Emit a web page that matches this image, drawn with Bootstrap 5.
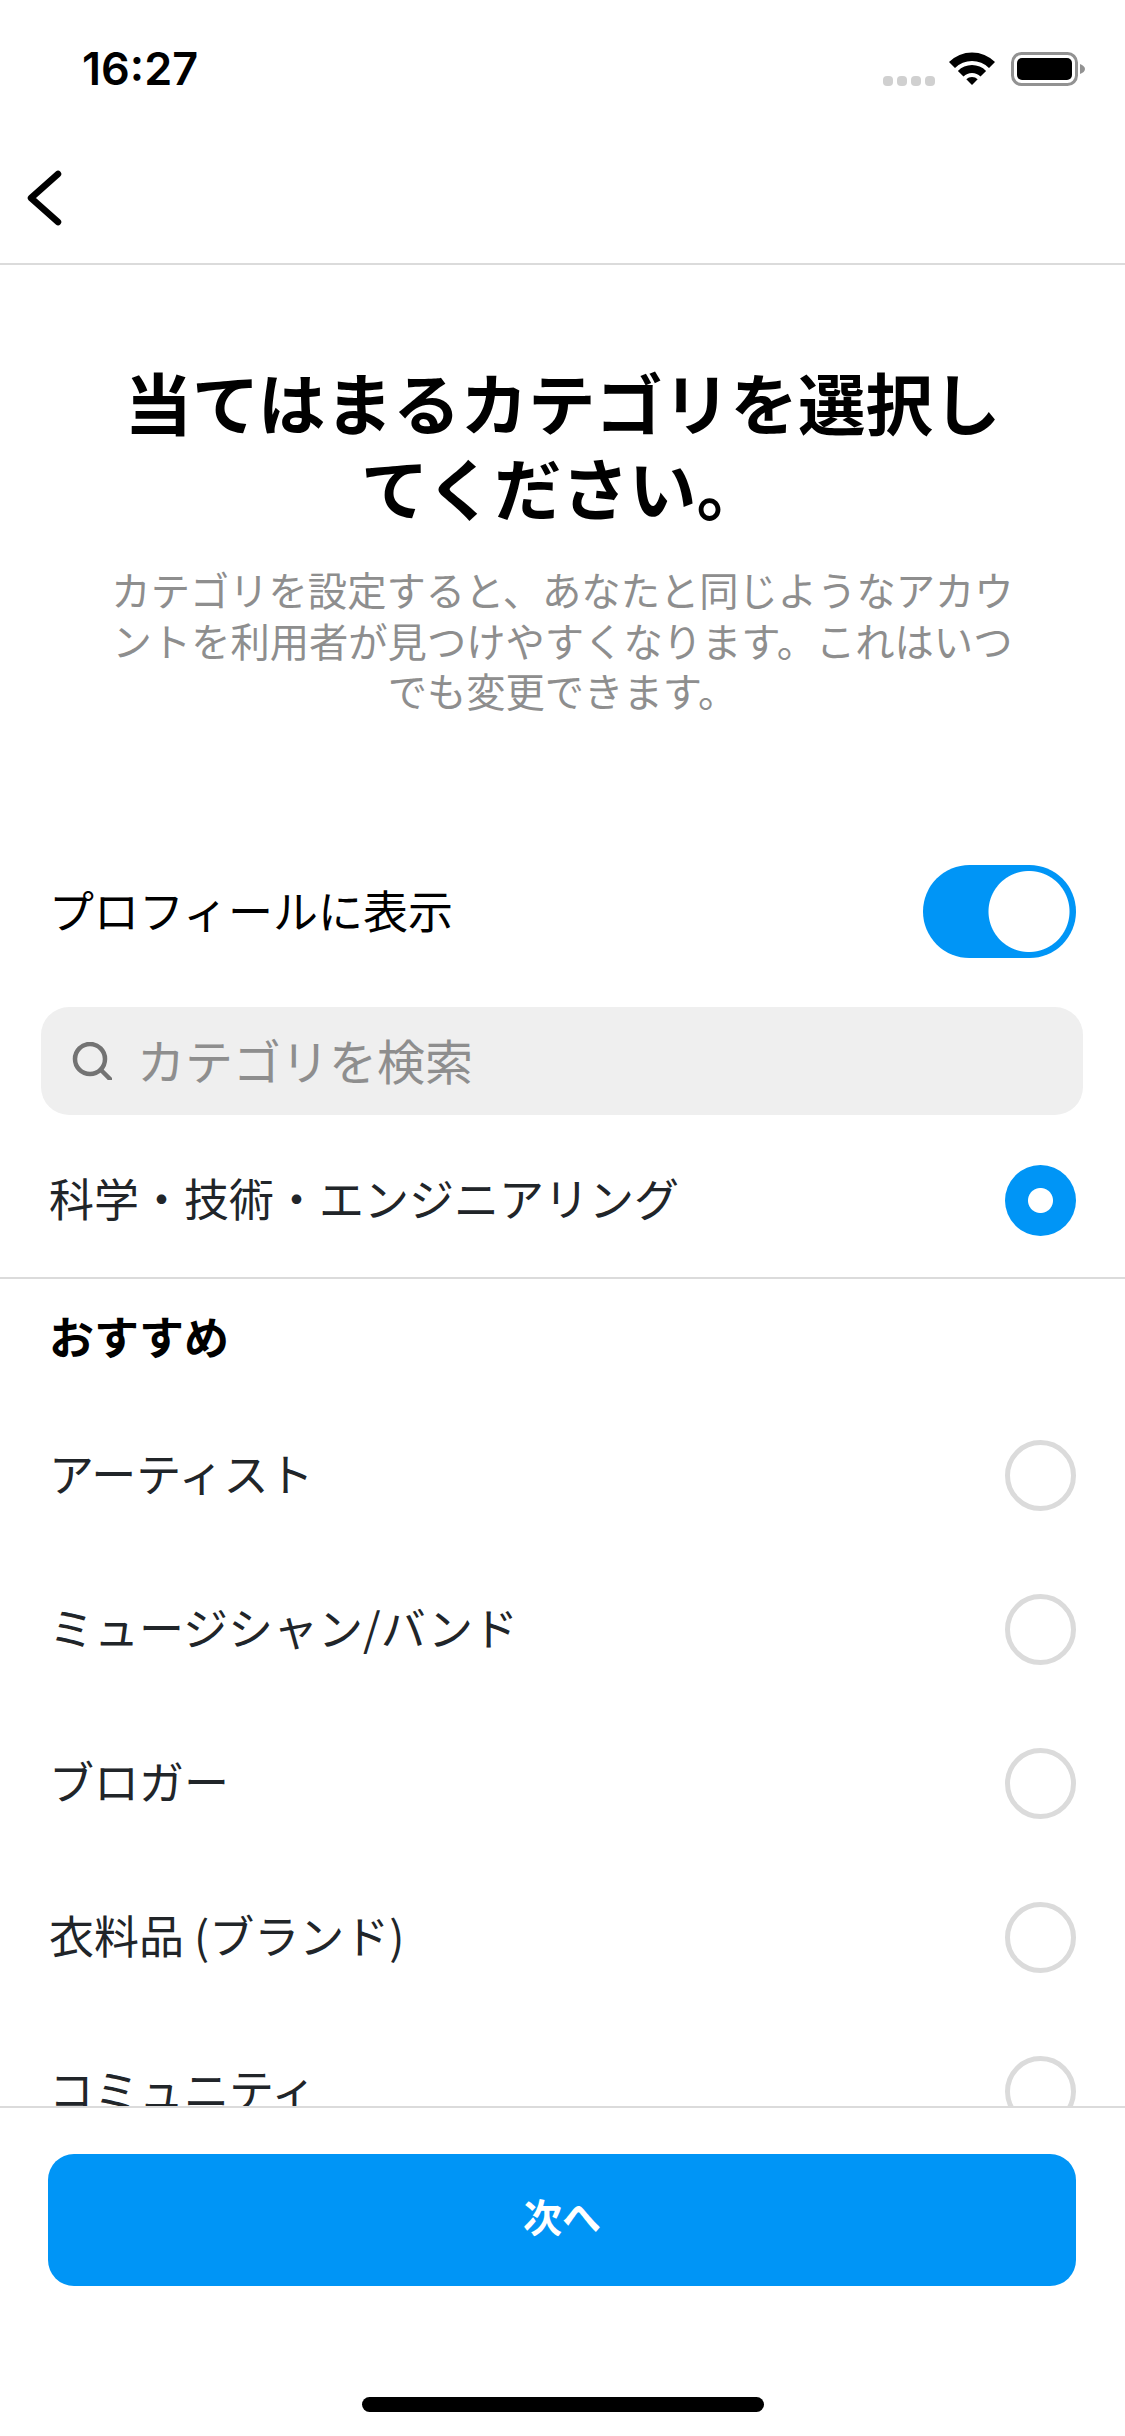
<!DOCTYPE html>
<html lang="ja">
<head>
    <meta charset="UTF-8">
    <title>カテゴリを選択</title>
    <link href="https://cdn.jsdelivr.net/npm/bootstrap@5.3.0/dist/css/bootstrap.min.css" rel="stylesheet">
    <style>
        body { font-family: "Noto Sans CJK JP", "Noto Sans", sans-serif; color: #000; background: #fff; }
        .status-area { height: 132px; padding: 52px 40px 0 82px; }
        .clock { font-family: Inter, "Liberation Sans", sans-serif; font-weight: 600; font-size: 45px; line-height: 34px; }
        .top-nav { height: 133px; padding-left: 27px; border-bottom: 2px solid #dbdbdb; }
        .page-scroll { min-height: 0; }
        .intro { padding: 93px 107px 0; }
        .intro-title { font-size: 67.5px; line-height: 85px; font-weight: 700; margin: 0; margin-inline: -2px; }
        .intro-sub { font-size: 39.3px; line-height: 50.5px; color: #8e8e8e; margin: 36px 0 0; }
        .toggle-row { height: 93px; margin-top: 149.5px; padding: 0 49px 0 49px; }
        .row-text { font-size: 45px; line-height: 60px; margin-bottom: 4px; }
        .pick-switch.form-check-input { width: 153px; height: 93px; margin: 0; border: 0; border-radius: 47px; float: none; background-color: #0095f6; background-image: radial-gradient(circle at 106px 46.5px, #fff 40px, transparent 41px); background-size: auto; }
        .search-box { height: 108px; margin: 49px 42px 0 41px; padding: 0 0 0 31px; background: #efefef; border-radius: 28px; }
        .search-box .form-control { background: transparent; border: 0; box-shadow: none; font-size: 48px; line-height: 60px; padding: 0 0 4px 25px; height: 108px; color: #000; }
        .search-box .form-control::placeholder { color: #8e8e8e; opacity: 1; }
        .pick-row { height: 154px; padding: 0 49px 0 49px; border: 0; border-radius: 0; }
        .pick-row.picked { margin-top: 8px; }
        .pick-radio.form-check-input { width: 71px; height: 71px; margin: 0; flex-shrink: 0; float: none; border: 5px solid #dbdbdb; background-color: #fff; box-shadow: none; }
        .pick-radio.form-check-input:checked { border: 0; background-color: #0095f6; background-image: radial-gradient(circle, #fff 12px, transparent 13px); background-size: auto; }
        .line-sep { border-top: 2px solid #dbdbdb; }
        .sec-head { height: 119px; padding: 0 0 6px 49px; font-weight: 700; font-size: 45px; }
        .foot-area { height: 330px; padding: 46px 49px 0 48px; border-top: 2px solid #dbdbdb; background: #fff; }
        .next-btn.btn { height: 132px; padding-bottom: 16px; background: #0095f6; border: 0; border-radius: 26px; color: #fff; font-size: 39px; font-weight: 700; }
        .home-bar { width: 402px; height: 15px; margin: 111px auto 0; transform: translateX(1px); background: #000; border-radius: 8px; }
    </style>
</head>
<body class="vh-100 d-flex flex-column overflow-hidden">

<div class="status-area d-flex justify-content-between align-items-start flex-shrink-0">
    <div class="clock">16:27</div>
    <svg width="202" height="34" viewBox="0 0 202 34">
        <g fill="#d0d0d0">
            <rect x="0" y="24" width="10" height="10" rx="4"/>
            <rect x="14" y="24" width="10" height="10" rx="4"/>
            <rect x="28" y="24" width="10" height="10" rx="4"/>
            <rect x="42" y="24" width="10" height="10" rx="4"/>
        </g>
        <g transform="translate(66 0)">
            <path d="M0 10A32.5 32.5 0 0 1 46 10L40 16A24 24 0 0 0 6 16Z"/>
            <path d="M8.9 18.9A20 20 0 0 1 37.1 18.9L31.5 24.5A12 12 0 0 0 14.5 24.5Z"/>
            <path d="M17.3 27.3A8 8 0 0 1 28.7 27.3L23 33Z"/>
        </g>
        <rect x="129.5" y="1.5" width="64" height="31" rx="9" fill="none" stroke="#929292" stroke-width="3"/>
        <rect x="134" y="6" width="55" height="22" rx="5"/>
        <path d="M197 12C200 13 202 15 202 17C202 19 200 21 197 22Z" fill="#929292"/>
    </svg>
</div>

<nav class="top-nav d-flex align-items-center flex-shrink-0">
    <svg width="35" height="56" viewBox="0 0 35 56">
        <path d="M31 4L4 28L31 52" fill="none" stroke="#000" stroke-width="6.5" stroke-linecap="round" stroke-linejoin="round"/>
    </svg>
</nav>

<main class="page-scroll flex-grow-1 overflow-hidden">
    <div class="intro text-center">
        <h1 class="intro-title">当てはまるカテゴリを選択してください。</h1>
        <p class="intro-sub">カテゴリを設定すると、あなたと同じようなアカウントを利用者が見つけやすくなります。これはいつでも変更できます。</p>
    </div>

    <div class="toggle-row d-flex justify-content-between align-items-center form-check form-switch">
        <label class="row-text" for="showProfile">プロフィールに表示</label>
        <input class="form-check-input pick-switch" type="checkbox" role="switch" id="showProfile" checked>
    </div>

    <div class="search-box d-flex align-items-center">
        <svg class="flex-shrink-0" width="40" height="38" viewBox="0 0 40 38">
            <circle cx="18" cy="17" r="15" fill="none" stroke="#737373" stroke-width="4.5"/>
            <path d="M29 28L38 37" stroke="#737373" stroke-width="4.5" stroke-linecap="round"/>
        </svg>
        <input class="form-control" type="text" placeholder="カテゴリを検索">
    </div>

    <div class="list-group list-group-flush">
        <label class="list-group-item pick-row picked d-flex justify-content-between align-items-center">
            <span class="row-text">科学・技術・エンジニアリング</span>
            <input class="form-check-input pick-radio" type="radio" name="category" checked>
        </label>
    </div>
    <div class="line-sep"></div>
    <div class="sec-head d-flex align-items-center">おすすめ</div>
    <div class="list-group list-group-flush">
        <label class="list-group-item pick-row d-flex justify-content-between align-items-center">
            <span class="row-text">アーティスト</span>
            <input class="form-check-input pick-radio" type="radio" name="category">
        </label>
        <label class="list-group-item pick-row d-flex justify-content-between align-items-center">
            <span class="row-text">ミュージシャン/バンド</span>
            <input class="form-check-input pick-radio" type="radio" name="category">
        </label>
        <label class="list-group-item pick-row d-flex justify-content-between align-items-center">
            <span class="row-text">ブロガー</span>
            <input class="form-check-input pick-radio" type="radio" name="category">
        </label>
        <label class="list-group-item pick-row d-flex justify-content-between align-items-center">
            <span class="row-text">衣料品 (ブランド)</span>
            <input class="form-check-input pick-radio" type="radio" name="category">
        </label>
        <label class="list-group-item pick-row d-flex justify-content-between align-items-center">
            <span class="row-text">コミュニティ</span>
            <input class="form-check-input pick-radio" type="radio" name="category">
        </label>
    </div>
</main>

<footer class="foot-area flex-shrink-0">
    <button type="button" class="btn next-btn w-100">次へ</button>
    <div class="home-bar"></div>
</footer>

<script src="https://cdn.jsdelivr.net/npm/bootstrap@5.3.0/dist/js/bootstrap.bundle.min.js"></script>
</body>
</html>
